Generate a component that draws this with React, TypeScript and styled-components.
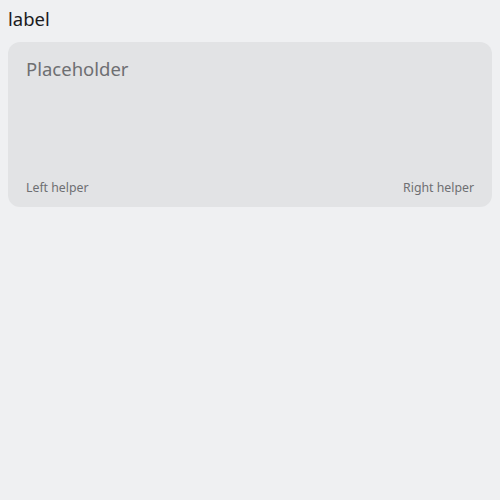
import React from "react";
import styled, { createGlobalStyle } from "styled-components";

const Global = createGlobalStyle`
  html, body { margin: 0; padding: 0; background: #eff0f2; }
  body { padding: 8px; font-family: "Noto Sans", "Open Sans", sans-serif; }
  * { box-sizing: border-box; }
`;

const Field = styled.div`
  display: flex;
  flex-direction: column;
  gap: 12px;
`;

const Label = styled.label`
  font-size: 18.5px;
  line-height: 22px;
  color: #1b1b1d;
`;

const Box = styled.div`
  display: flex;
  flex-direction: column;
  background: #e2e3e5;
  border-radius: 12px;
  padding: 15px 18px 11px;
  height: 165px;
`;

const Area = styled.textarea`
  flex: 1;
  border: none;
  outline: none;
  resize: none;
  background: transparent;
  padding: 0;
  font-family: inherit;
  font-size: 18.5px;
  line-height: 24px;
  color: #1b1b1d;
  &::placeholder { color: #6e6f72; }
`;

const Footer = styled.div`
  display: flex;
  justify-content: space-between;
  font-size: 12.3px;
  line-height: 16px;
  color: #6e6f72;
`;

export default function App() {
  return (
    <>
      <Global />
      <Field>
        <Label>label</Label>
        <Box>
          <Area placeholder="Placeholder" />
          <Footer>
            <span>Left helper</span>
            <span>Right helper</span>
          </Footer>
        </Box>
      </Field>
    </>
  );
}
